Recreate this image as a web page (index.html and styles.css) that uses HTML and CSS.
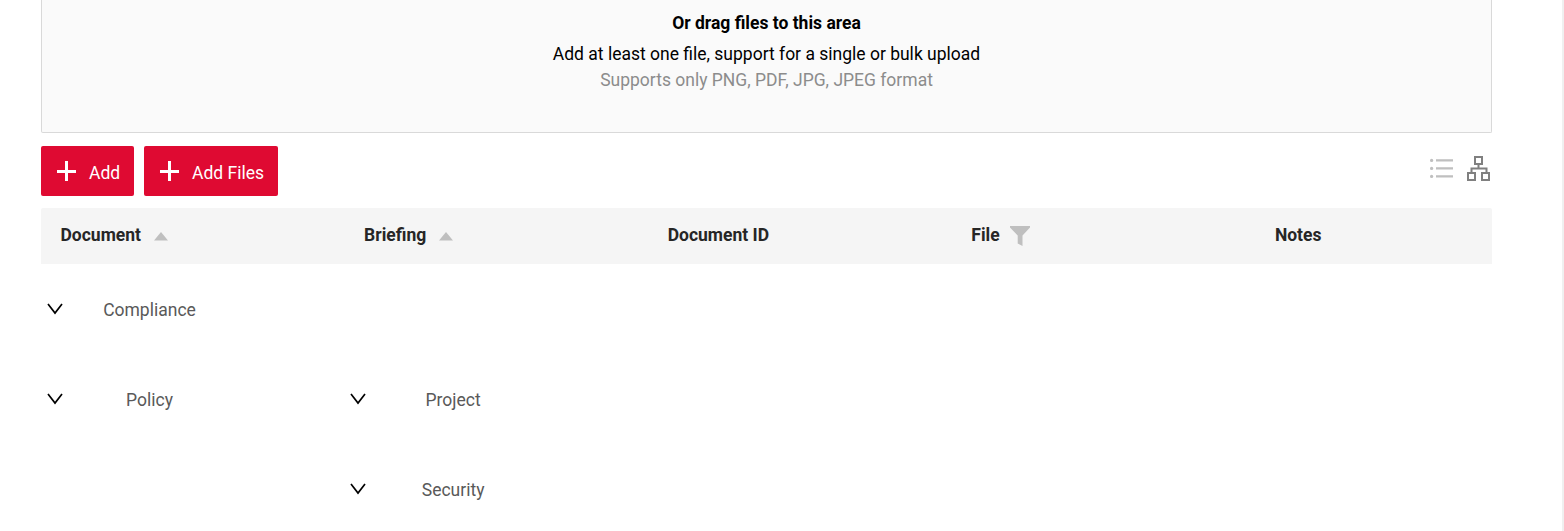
FILE: index.html
```html
<!DOCTYPE html>
<html lang="en">
<head>
<meta charset="utf-8">
<title>Documents</title>
<link rel="stylesheet" href="styles.css">
</head>
<body>
<main class="page">
  <section class="dropzone">
    <p class="drop-title">Or drag files to this area</p>
    <p class="drop-text">Add at least one file, support for a single or bulk upload</p>
    <p class="drop-hint">Supports only PNG, PDF, JPG, JPEG format</p>
  </section>

  <div class="toolbar">
    <button class="btn btn-add"><svg class="plus" viewBox="0 0 19 20"><path d="M8 0h3v9h8v3h-8v8H8v-8H0V9h8z"/></svg><span>Add</span></button>
    <button class="btn btn-files"><svg class="plus" viewBox="0 0 19 20"><path d="M8 0h3v9h8v3h-8v8H8v-8H0V9h8z"/></svg><span>Add Files</span></button>
    <div class="views">
      <svg class="list-icon" viewBox="0 0 23 20"><g fill="#bfbfbf"><circle cx="1.6" cy="2.4" r="1.6"/><circle cx="1.6" cy="10.4" r="1.6"/><circle cx="1.6" cy="18.4" r="1.6"/><path d="M6 1.3h17v2.2H6zM6 9.3h17v2.2H6zM6 17.3h17v2.2H6z"/></g></svg>
      <svg class="tree-icon" viewBox="0 0 23 25"><g fill="none" stroke="#808080" stroke-width="2"><path d="M8 1h7v7H8zM1 17h7v7H1zM15 17h7v7h-7z"/><path d="M11.500 9v3.500M4.500 16v-3.500h15V16"/></g></svg>
    </div>
  </div>

  <div class="table">
    <div class="row head">
      <div class="th">Document<svg class="sort" viewBox="0 0 14 9"><path d="M7 0l7 8.500H0z"/></svg></div>
      <div class="th">Briefing<svg class="sort" viewBox="0 0 14 9"><path d="M7 0l7 8.500H0z"/></svg></div>
      <div class="th">Document ID</div>
      <div class="th">File<svg class="filter" viewBox="0 0 20 20"><path d="M0 0h20v1.500L12.500 9.500V20L7.700 17.500v-8L0 1.500z"/></svg></div>
      <div class="th">Notes</div>
    </div>
    <div class="row">
      <div class="td"><svg class="chevron" viewBox="0 0 16 12"><path d="M1 1l7 9 7-9"/></svg><span class="name">Compliance</span></div>
    </div>
    <div class="row">
      <div class="td"><svg class="chevron" viewBox="0 0 16 12"><path d="M1 1l7 9 7-9"/></svg><span class="name">Policy</span></div>
      <div class="td"><svg class="chevron" viewBox="0 0 16 12"><path d="M1 1l7 9 7-9"/></svg><span class="name">Project</span></div>
    </div>
    <div class="row">
      <div class="td"></div>
      <div class="td"><svg class="chevron" viewBox="0 0 16 12"><path d="M1 1l7 9 7-9"/></svg><span class="name">Security</span></div>
    </div>
  </div>
</main>
</body>
</html>
```
FILE: styles.css
```css
* { box-sizing: border-box; }
html, body { height: 100%; }
body {
  margin: 0;
  overflow: hidden;
  background: #fff;
  border-right: 2px solid #f0f0f0;
  font: 17.5px/26px Roboto, sans-serif;
}
.page { width: 1451px; margin-left: 41px; }
.dropzone {
  height: 133px;
  padding-top: 10px;
  background: #fafafa;
  border: 1px solid #d9d9d9;
  border-top: 0;
  border-radius: 0 0 2px 2px;
  text-align: center;
  color: #000;
}
.dropzone p { margin: 0; }
.dropzone .drop-title { font-weight: 700; margin-bottom: 5px; }
.dropzone .drop-hint { color: #8c8c8c; }
.toolbar { display: flex; gap: 10px; height: 50px; margin: 13px 0 12px; }
.btn {
  display: flex;
  align-items: center;
  gap: 13px;
  height: 50px;
  padding: 3px 0 0 16px;
  border: 0;
  border-radius: 2px;
  background: #df0a32;
  color: #fff;
  font: inherit;
  white-space: nowrap;
}
.btn-add { width: 93px; }
.btn-files { width: 134px; }
.plus { flex: none; width: 19px; height: 20px; margin-top: -3px; fill: #fff; }
.views { display: flex; gap: 14px; margin-left: auto; padding: 10px 2px 0 0; }
.list-icon { width: 23px; height: 20px; margin-top: 2px; }
.tree-icon { width: 23px; height: 25px; }
.row { display: grid; grid-template-columns: repeat(5, 303.6px); height: 90px; }
.head {
  height: 56px;
  background: #f5f5f5;
  border-radius: 2px 2px 0 0;
  width: 1451px;
  overflow: hidden;
}
.th {
  display: flex;
  align-items: center;
  padding: 0 0 2px 19.5px;
  font-weight: 700;
  color: #262626;
}
.sort { width: 14px; height: 9px; margin: 2px 0 0 13px; fill: #bfbfbf; }
.filter { width: 20px; height: 20px; margin: 1px 0 0 10px; fill: #bfbfbf; }
.td { display: flex; align-items: center; padding-left: 5.5px; color: #595959; }
.chevron { width: 16px; height: 12px; fill: none; stroke: #000; stroke-width: 1.7; }
.name { width: 174px; text-align: center; margin-top: 1px; }
```
